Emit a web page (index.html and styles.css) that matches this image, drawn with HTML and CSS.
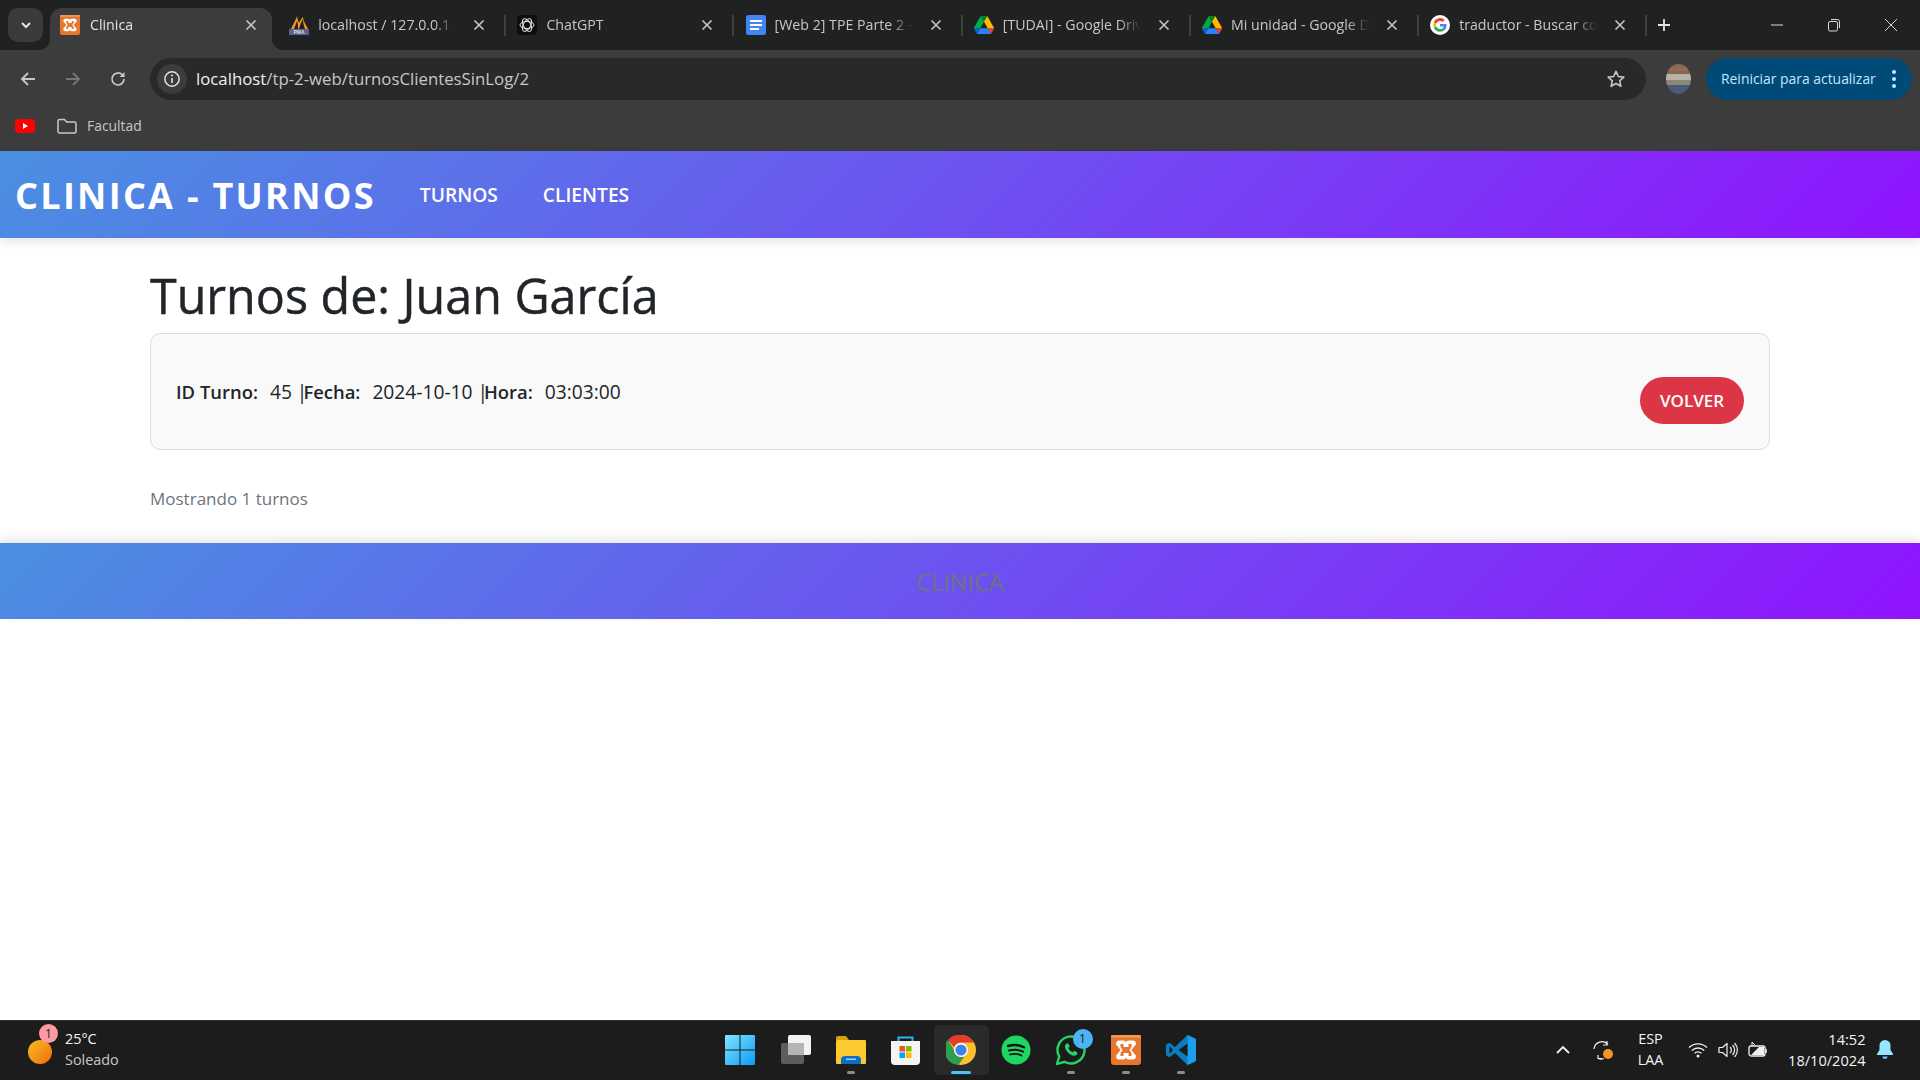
FILE: index.html
```html
<!DOCTYPE html>
<html lang="es">
<head>
<meta charset="utf-8">
<title>Clinica</title>
<link rel="stylesheet" href="styles.css">
</head>
<body>
<svg class="defs" width="0" height="0" aria-hidden="true">
  <symbol id="x" viewBox="0 0 16 16"><path d="M3.5 3.5l9 9M12.5 3.5l-9 9" fill="none" stroke="#c7c7c7" stroke-width="1.6"/></symbol>
  <symbol id="xampp" viewBox="0 0 30 30"><rect width="30" height="30" rx="3" fill="#e8772e"/><rect y="0" width="30" height="2.5" fill="#f6a76c" opacity=".7"/><path d="M8 5.5h4.5a2.5 2.5 0 0 1 2.5 2.2 2.5 2.5 0 0 1 2.5-2.2H22a3 3 0 0 1 1.5 5.6L20.5 15l3 3.9A3 3 0 0 1 22 24.5h-4.500a2.500 2.500 0 0 1-2.500-2.200 2.500 2.500 0 0 1-2.500 2.200H8a3 3 0 0 1-1.500-5.600L9.500 15l-3-3.900A3 3 0 0 1 8 5.500z" fill="#fff"/><path d="M9.500 9h3v3h5V9h3v3l-2 3 2 3v3h-3v-3h-5v3h-3v-3l2-3-2-3z" fill="#e8772e"/></symbol>
  <symbol id="drive" viewBox="0 0 87.300 78"><path d="M6.600 66.850l3.850 6.650c.8 1.400 1.950 2.500 3.300 3.300L27.500 53H0c0 1.550.4 3.100 1.200 4.500z" fill="#0066da"/><path d="M43.650 25L29.900 1.200c-1.350.8-2.500 1.900-3.300 3.300L1.200 48.500A9 9 0 0 0 0 53h27.500z" fill="#00ac47"/><path d="M73.550 76.800c1.350-.8 2.500-1.900 3.300-3.300l1.600-2.750 7.650-13.250c.8-1.400 1.200-2.950 1.200-4.500H59.800l5.850 11.500z" fill="#ea4335"/><path d="M43.650 25L57.400 1.200C56.050.4 54.500 0 52.900 0H34.400c-1.600 0-3.150.45-4.500 1.200z" fill="#00832d"/><path d="M59.800 53H27.500L13.750 76.800c1.350.8 2.900 1.200 4.500 1.200h50.800c1.600 0 3.150-.45 4.500-1.200z" fill="#2684fc"/><path d="M73.400 26.500L60.700 4.500c-.8-1.400-1.950-2.500-3.300-3.300L43.650 25 59.800 53h27.450c0-1.550-.4-3.100-1.200-4.500z" fill="#ffba00"/></symbol>
</svg>

<header class="browser">
  <div class="tabstrip">
    <div class="tabmenu"><svg width="14" height="14" viewBox="0 0 14 14"><path d="M3 5l4 4 4-4" fill="none" stroke="#e3e3e3" stroke-width="2"/></svg></div>
    <div class="tab tab-active">
      <div class="tab-body">
        <svg class="fav" viewBox="0 0 30 30"><use href="#xampp"/></svg>
        <span class="tab-title">Clinica</span>
        <svg class="tab-x"><use href="#x"/></svg>
      </div>
    </div>
    <div class="tab">
      <div class="tab-body">
        <svg class="fav" viewBox="0 0 20 20"><path d="M8 1C7 5 4 9 2 14h3c1-3 2-5 3-8 1 3 1 5 1 8h1c1-4 2-7 4-10 0 4 1 7 2 10h3C17 10 14 6 14 2c-2 2-3 4-4 6-1-3-2-5-2-7z" fill="#f29c1f"/><rect x="0" y="14" width="20" height="6" fill="#5b5f8c"/><text x="10" y="19.300" class="pma">PMA</text></svg>
        <span class="tab-title">localhost / 127.0.0.1 / clinica</span>
        <svg class="tab-x"><use href="#x"/></svg>
      </div>
      <i class="tab-sep"></i>
    </div>
    <div class="tab">
      <div class="tab-body">
        <svg class="fav" viewBox="0 0 20 20"><rect width="20" height="20" rx="4" fill="#0d0d0d"/><g fill="none" stroke="#e3e3e3" stroke-width="1"><ellipse cx="10" cy="10" rx="7" ry="3.600"/><ellipse cx="10" cy="10" rx="7" ry="3.600" transform="rotate(60 10 10)"/><ellipse cx="10" cy="10" rx="7" ry="3.600" transform="rotate(120 10 10)"/></g></svg>
        <span class="tab-title">ChatGPT</span>
        <svg class="tab-x"><use href="#x"/></svg>
      </div>
      <i class="tab-sep"></i>
    </div>
    <div class="tab">
      <div class="tab-body">
        <svg class="fav" viewBox="0 0 20 20"><rect width="20" height="20" rx="2.500" fill="#4285f4"/><path d="M4 5h12v2H4zM4 9h12v2H4zM4 13h9v2H4z" fill="#fff"/></svg>
        <span class="tab-title">[Web 2] TPE Parte 2 - Documentos</span>
        <svg class="tab-x"><use href="#x"/></svg>
      </div>
      <i class="tab-sep"></i>
    </div>
    <div class="tab">
      <div class="tab-body">
        <svg class="fav" viewBox="0 0 87.300 78"><use href="#drive"/></svg>
        <span class="tab-title">[TUDAI] - Google Drive</span>
        <svg class="tab-x"><use href="#x"/></svg>
      </div>
      <i class="tab-sep"></i>
    </div>
    <div class="tab">
      <div class="tab-body">
        <svg class="fav" viewBox="0 0 87.300 78"><use href="#drive"/></svg>
        <span class="tab-title">Mi unidad - Google Drive</span>
        <svg class="tab-x"><use href="#x"/></svg>
      </div>
      <i class="tab-sep"></i>
    </div>
    <div class="tab">
      <div class="tab-body">
        <svg class="fav" viewBox="0 0 20 20"><circle cx="10" cy="10" r="10" fill="#fff"/><path d="M16.500 10.200c0-.5 0-.9-.1-1.300H10v2.500h3.700a3.200 3.200 0 0 1-1.400 2l2.200 1.700c1.300-1.200 2-3 2-4.900z" fill="#4285f4"/><path d="M10 16.800c1.800 0 3.400-.6 4.500-1.700l-2.200-1.700c-.6.400-1.400.7-2.300.7-1.800 0-3.300-1.200-3.800-2.800L3.900 13c1.100 2.300 3.500 3.800 6.100 3.800z" fill="#34a853"/><path d="M6.200 11.300a4 4 0 0 1 0-2.600L3.900 7a6.800 6.800 0 0 0 0 6z" fill="#fbbc05"/><path d="M10 5.900c1 0 1.900.4 2.600 1l2-2A6.700 6.700 0 0 0 3.900 7l2.300 1.700C6.700 7.100 8.200 5.900 10 5.900z" fill="#ea4335"/></svg>
        <span class="tab-title">traductor - Buscar con Google</span>
        <svg class="tab-x"><use href="#x"/></svg>
      </div>
      <i class="tab-sep"></i>
    </div>
    <div class="newtab"><svg width="16" height="16" viewBox="0 0 16 16"><path d="M8 2v12M2 8h12" stroke="#e3e3e3" stroke-width="1.800"/></svg></div>
    <div class="winctl">
      <div class="winbtn"><svg width="14" height="14" viewBox="0 0 14 14"><path d="M1 7h12" stroke="#d8d8d8" stroke-width="1"/></svg></div>
      <div class="winbtn"><svg width="14" height="14" viewBox="0 0 14 14"><rect x="1.500" y="3.500" width="9" height="9.500" rx="1.500" fill="none" stroke="#d8d8d8"/><path d="M4 1.500h6.500a2 2 0 0 1 2 2V10" fill="none" stroke="#d8d8d8"/></svg></div>
      <div class="winbtn"><svg width="14" height="14" viewBox="0 0 14 14"><path d="M1 1l12 12M13 1L1 13" stroke="#d8d8d8" stroke-width="1"/></svg></div>
    </div>
  </div>

  <div class="toolbar">
    <div class="navbtn"><svg width="18" height="18" viewBox="0 0 18 18"><path d="M16 9H3M9 3L3 9l6 6" fill="none" stroke="#c7c7c7" stroke-width="1.800"/></svg></div>
    <div class="navbtn"><svg width="18" height="18" viewBox="0 0 18 18"><path d="M2 9h13M9 3l6 6-6 6" fill="none" stroke="#757575" stroke-width="1.800"/></svg></div>
    <div class="navbtn"><svg width="18" height="18" viewBox="0 0 18 18"><path d="M15 9a6 6 0 1 1-1.800-4.300L15 6.500" fill="none" stroke="#c7c7c7" stroke-width="1.700"/><path d="M15.500 2v5h-5z" fill="#c7c7c7"/></svg></div>
    <div class="omnibox">
      <div class="infochip"><svg width="18" height="18" viewBox="0 0 18 18"><circle cx="9" cy="9" r="7.200" fill="none" stroke="#e3e3e3" stroke-width="1.500"/><path d="M9 8v5" stroke="#e3e3e3" stroke-width="1.600"/><circle cx="9" cy="5.600" r="1" fill="#e3e3e3"/></svg></div>
      <span class="url"><b class="host">localhost</b>/tp-2-web/turnosClientesSinLog/2</span>
      <svg class="star" width="20" height="20" viewBox="0 0 20 20"><path d="M10 2.400l2.300 5.100 5.500.6-4.100 3.700 1.200 5.500L10 14.500l-4.900 2.800 1.200-5.500-4.100-3.700 5.500-.6z" fill="none" stroke="#c7c7c7" stroke-width="1.600" stroke-linejoin="round"/></svg>
    </div>
    <div class="avatar"><svg width="25" height="30" viewBox="0 0 25 30"><defs><clipPath id="av"><ellipse cx="12.500" cy="15" rx="12.500" ry="15"/></clipPath></defs><g clip-path="url(#av)"><rect width="25" height="10" fill="#7d6a5c"/><rect y="3" x="3" width="19" height="4" fill="#a0664a"/><rect y="10" width="25" height="6" fill="#b9b3a6"/><rect y="16" width="25" height="5" fill="#8b8778"/><rect y="21" width="25" height="9" fill="#4c5a7a"/></g></svg></div>
    <div class="update"><span>Reiniciar para actualizar</span><svg width="6" height="20" viewBox="0 0 6 20"><circle cx="3" cy="3" r="2" fill="#c2e7ff"/><circle cx="3" cy="10" r="2" fill="#c2e7ff"/><circle cx="3" cy="17" r="2" fill="#c2e7ff"/></svg></div>
  </div>

  <div class="bookmarks">
    <svg width="20" height="14" viewBox="0 0 20 14"><rect width="20" height="14" rx="4" fill="#f00"/><path d="M8 4l5 3-5 3z" fill="#fff"/></svg>
    <div class="bm-folder">
      <svg width="20" height="16" viewBox="0 0 20 16"><path d="M1 3a1.500 1.500 0 0 1 1.500-1.500h5L9.500 4h8A1.500 1.500 0 0 1 19 5.500v8a1.500 1.500 0 0 1-1.500 1.500h-15A1.500 1.500 0 0 1 1 13.500z" fill="none" stroke="#c7c7c7" stroke-width="1.500"/></svg>
      <span>Facultad</span>
    </div>
  </div>
</header>

<div class="viewport">
  <nav class="site-nav">
    <a class="brand">CLINICA - TURNOS</a>
    <a class="nav-link">TURNOS</a>
    <a class="nav-link">CLIENTES</a>
  </nav>
  <main class="content">
    <h1>Turnos de: Juan García</h1>
    <div class="turno-card">
      <p class="turno-info"><strong>ID Turno:</strong>&nbsp; 45 |<strong>Fecha:</strong>&nbsp; 2024-10-10 |<strong>Hora:</strong>&nbsp; 03:03:00</p>
      <a class="btn-volver">VOLVER</a>
    </div>
    <p class="count">Mostrando 1 turnos</p>
  </main>
  <footer class="site-footer"><span>CLINICA</span></footer>
</div>

<div class="taskbar">
  <div class="tb-left">
    <div class="weather-icon"><i class="sun"></i><b class="wbadge">1</b></div>
    <div class="weather-text"><span class="temp">25°C</span><span class="cond">Soleado</span></div>
  </div>
  <div class="tb-center">
    <div class="tb-item tb-nudge"><svg width="30" height="30" viewBox="0 0 30 30"><defs><linearGradient id="win" x1="0" y1="0" x2="1" y2="1"><stop offset="0" stop-color="#7fe6ff"/><stop offset="1" stop-color="#0e9bf5"/></linearGradient></defs><path d="M1 0h13.500v14.500H0V1a1 1 0 0 1 1-1zM15.500 0H29a1 1 0 0 1 1 1v13.500H15.500zM0 15.500h14.500V30H1a1 1 0 0 1-1-1zM15.500 15.500H30V29a1 1 0 0 1-1 1H15.500z" fill="url(#win)"/></svg></div>
    <div class="tb-item"><svg width="30" height="30" viewBox="0 0 30 30"><rect x="0" y="8" width="23" height="21" rx="2" fill="#5d5d5d"/><rect x="7" y="0" width="23" height="20" rx="2" fill="#f3f3f3"/><rect x="7" y="8" width="16" height="12" fill="#b5b5b5"/></svg></div>
    <div class="tb-item tb-pip"><svg width="30" height="28" viewBox="0 0 30 28"><path d="M0 2a2 2 0 0 1 2-2h8l3 4H0z" fill="#d9a10b"/><rect y="4" width="30" height="24" rx="1" fill="#fcc92f"/><path d="M5 24a4 4 0 0 1 4-4h12a4 4 0 0 1 4 4v4H5z" fill="#0c6fc4"/><rect x="10" y="22.500" width="10" height="1.500" fill="#9fd0f5"/></svg></div>
    <div class="tb-item tb-nudge"><svg width="29" height="30" viewBox="0 0 29 30"><path d="M7.500 6V2.500h14V6" fill="none" stroke="#2ab5ee" stroke-width="2"/><path d="M0 6h29v20a4 4 0 0 1-4 4H4a4 4 0 0 1-4-4z" fill="#f4f4f4"/><rect x="8.500" y="11" width="5.500" height="5.500" fill="#f25022"/><rect x="15" y="11" width="5.500" height="5.500" fill="#7fba00"/><rect x="8.500" y="17.500" width="5.500" height="5.500" fill="#00a4ef"/><rect x="15" y="17.500" width="5.500" height="5.500" fill="#ffb900"/></svg></div>
    <div class="tb-item tb-active"><svg width="30" height="30" viewBox="0 0 30 30"><circle cx="15" cy="15" r="15" fill="#fbc02d"/><path d="M15 0a15 15 0 0 1 13 7.500H15a7.500 7.500 0 0 0-7 4.800L2 4.800A15 15 0 0 1 15 0z" fill="#e33b2e"/><path d="M2 4.800l6.500 11A7.500 7.500 0 0 0 18.500 21.600L12.500 29.800A15 15 0 0 1 2 4.800z" fill="#2e9e4f"/><circle cx="15" cy="15" r="7" fill="#fff"/><circle cx="15" cy="15" r="5.600" fill="#3f83ea"/></svg></div>
    <div class="tb-item"><svg width="30" height="30" viewBox="0 0 30 30"><circle cx="15" cy="15" r="14.500" fill="#1ed760"/><g fill="none" stroke="#191414" stroke-linecap="round"><path d="M7 11c6-1.800 11.500-1.200 16 1.300" stroke-width="2.400"/><path d="M8 15.500c5-1.400 9.800-1 14 1.200" stroke-width="2"/><path d="M9 19.500c4.200-1 8-.8 11.500 1" stroke-width="1.700"/></g></svg></div>
    <div class="tb-item tb-pip tb-wa"><svg width="30" height="30" viewBox="0 0 30 30"><path d="M1 29l2.200-7.500A13.500 13.500 0 1 1 8.500 26.800z" fill="none" stroke="#25d366" stroke-width="2.400" stroke-linejoin="round"/><path d="M10.500 8.500c-1.500 1-2 3-1 5.500 1.500 3 4 5.500 7 6.500 2 .6 4 0 4.800-1.500l-.2-1.800-3-1.500-1.500 1.500c-2-.8-3.500-2.300-4.300-4.300l1.500-1.500-1.500-3z" fill="#25d366"/></svg><b class="wa-badge">1</b></div>
    <div class="tb-item tb-pip"><svg width="30" height="30" viewBox="0 0 30 30"><use href="#xampp"/></svg></div>
    <div class="tb-item tb-pip"><svg width="30" height="30" viewBox="0 0 30 30"><path d="M21.500 0L30 4v22l-8.500 4L9 18l-5.500 4.300L0 20.300V9.700l3.500-2L9 12z" fill="#0a7cc4"/><path d="M21.500 0L30 4v22l-8.500 4z" fill="#1c9cea"/><path d="M21.500 8.500L12.500 15l9 6.500z" fill="#1c1c1c"/><path d="M3.500 11l3.500 4-3.500 4z" fill="#1c1c1c"/></svg></div>
  </div>
  <div class="tb-right">
    <svg class="tray-chev" width="16" height="10" viewBox="0 0 16 10"><path d="M2 8l6-6 6 6" fill="none" stroke="#f0f0f0" stroke-width="1.800"/></svg>
    <svg class="tray-sync" width="20" height="20" viewBox="0 0 20 20"><path d="M1 9a8 8 0 0 1 14-4.500M14 1v4h-4M5 18.500h4M5 15v3.500a8 8 0 0 0 6 0" fill="none" stroke="#f0f0f0" stroke-width="1.200"/><circle cx="15" cy="14" r="5" fill="#f7941d"/></svg>
    <div class="lang"><span>ESP</span><span>LAA</span></div>
    <div class="tray-icons">
      <svg width="20" height="16" viewBox="0 0 20 16"><g fill="none" stroke="#f0f0f0" stroke-width="1.400"><path d="M1 5.500a13 13 0 0 1 18 0"/><path d="M3.800 8.500a9 9 0 0 1 12.400 0"/><path d="M6.600 11.300a5 5 0 0 1 6.800 0"/></g><circle cx="10" cy="14" r="1.500" fill="#f0f0f0"/></svg>
      <svg width="20" height="18" viewBox="0 0 20 18"><path d="M1 6.500h3.500L9 2.500v13l-4.500-4H1z" fill="none" stroke="#f0f0f0" stroke-width="1.200" stroke-linejoin="round"/><path d="M12 6a4 4 0 0 1 0 6M14.500 4a7 7 0 0 1 0 10M16.500 2a10 10 0 0 1 0 14" fill="none" stroke="#f0f0f0" stroke-width="1.200"/></svg>
      <svg width="20" height="16" viewBox="0 0 20 16"><rect x="1" y="4" width="16" height="10" rx="2" fill="none" stroke="#f0f0f0" stroke-width="1.300"/><path d="M18 7v4" stroke="#f0f0f0" stroke-width="1.600"/><path d="M2 14l9-9h5v8H3z" fill="#f0f0f0"/><path d="M4 4V0l3 3" fill="none" stroke="#f0f0f0"/></svg>
    </div>
    <div class="clock"><span>14:52</span><span>18/10/2024</span></div>
    <svg class="bell" width="16" height="20" viewBox="0 0 16 20"><path d="M8 0a5.500 5.500 0 0 1 5.500 5.500V10l2.500 4v1H0v-1l2.500-4V5.500A5.500 5.500 0 0 1 8 0z" fill="#96e6ff"/><path d="M5.500 16.500h5a2.500 2.500 0 0 1-5 0z" fill="#5cc4e8"/></svg>
  </div>
</div>
</body>
</html>
```

FILE: styles.css
```css
* { box-sizing: border-box; }
html, body { margin: 0; height: 100%; }
body {
  display: flex;
  flex-direction: column;
  height: 1080px;
  overflow: hidden;
  background: #fff;
  font-family: "Open Sans", "Noto Sans", sans-serif;
}
.defs { display: block; height: 0; }
svg { display: block; flex: none; }

/* browser chrome */
.browser { background: #3c3c3c; flex: none; }
.tabstrip {
  display: flex;
  align-items: flex-end;
  height: 50px;
  padding-left: 8px;
  background: #202221;
}
.tabmenu {
  width: 35px;
  height: 34px;
  margin: 0 7px 8px 0;
  border-radius: 10px;
  background: #3a3b3b;
  display: flex;
  align-items: center;
  justify-content: center;
}
.tab {
  flex: 0 0 228.2px;
  height: 42px;
  display: flex;
  align-items: center;
}
.tab-body {
  width: 222px;
  height: 42px;
  flex: none;
  display: flex;
  align-items: center;
  padding: 0 13px 8px 10px;
  border-radius: 12px 12px 0 0;
  position: relative;
}
.tab-active .tab-body { background: #3c3c3c; }
.tab-active .tab-body::before,
.tab-active .tab-body::after {
  content: "";
  position: absolute;
  bottom: 0;
  width: 12px;
  height: 12px;
}
.tab-active .tab-body::before { left: -12px; background: radial-gradient(circle at 0 0, transparent 12px, #3c3c3c 12.5px); }
.tab-active .tab-body::after { right: -12px; background: radial-gradient(circle at 100% 0, transparent 12px, #3c3c3c 12.5px); }
.fav { width: 20px; height: 20px; margin-right: 10px; }
.tab:not(.tab-active) .fav { transform: translateX(1px); }
.tab-title {
  flex: 1;
  min-width: 0;
  white-space: nowrap;
  overflow: hidden;
  font-size: 14.200px;
  line-height: 18px;
  margin-bottom: 1px;
  color: #c7c7c7;
  -webkit-mask-image: linear-gradient(90deg, #000 84%, transparent 100%);
  mask-image: linear-gradient(90deg, #000 84%, transparent 100%);
}
.tab-active .tab-title { color: #e3e3e3; }
.tab-x { width: 16px; height: 16px; margin-left: 15px; }
.tab-sep {
  width: 2px;
  height: 21px;
  margin: 0 0 8px 4px;
  background: #3f4140;
  flex: none;
}
.pma { font: bold 5px "Liberation Sans", sans-serif; fill: #d8dcf0; text-anchor: middle; }
.newtab {
  width: 44px;
  height: 42px;
  padding-bottom: 8px;
  display: flex;
  align-items: center;
  justify-content: center;
  margin-left: -5px;
}
.winctl { margin-left: auto; padding-right: 1px; display: flex; height: 50px; align-self: flex-start; }
.winbtn {
  width: 57px;
  height: 50px;
  display: flex;
  align-items: center;
  justify-content: center;
}

.toolbar {
  display: flex;
  align-items: center;
  height: 58px;
  padding: 8px 8px 8px 5px;
  border-radius: 8px 8px 0 0;
}
.navbtn {
  width: 45px;
  height: 42px;
  display: flex;
  align-items: center;
  justify-content: center;
}
.omnibox {
  width: 1496px;
  height: 42px;
  margin-left: 10px;
  border-radius: 21px;
  background: #292929;
  display: flex;
  align-items: center;
  padding: 0 20px 0 7px;
}
.infochip {
  width: 30px;
  height: 30px;
  border-radius: 50%;
  background: #3c3c3c;
  display: flex;
  align-items: center;
  justify-content: center;
  margin-right: 9px;
}
.url { flex: 1; font-size: 16.800px; line-height: 24px; color: #c7c7c7; white-space: nowrap; }
.host { font-weight: 400; color: #f0f0f0; }
.avatar { margin-left: 20px; width: 25px; }
.update {
  margin-left: 15px;
  width: 206px;
  height: 42px;
  border-radius: 21px;
  background: #004a77;
  color: #c2e7ff;
  font-size: 13.900px;
  display: flex;
  align-items: center;
  justify-content: space-between;
  padding: 0 15px 0 15px;
  white-space: nowrap;
}
.update span { margin-bottom: 2px; }
.bookmarks {
  height: 43px;
  display: flex;
  align-items: center;
  padding: 0 0 8px 15px;
}
.bm-folder {
  display: flex;
  align-items: center;
  gap: 10px;
  margin-left: 22px;
  font-size: 13.900px;
  color: #c7c7c7;
}

/* page */
.viewport { flex: 1; min-height: 0; background: #fff; }
.site-nav {
  height: 87px;
  display: flex;
  align-items: center;
  padding-left: 15px;
  background: linear-gradient(135deg, #4a90e2, #9013fe);
  box-shadow: 0 4px 10px rgba(0,0,0,.1);
  color: #fff;
}
.brand { font-size: 36px; font-weight: 700; letter-spacing: 2.300px; margin: 2px 44px 0 0; }
.nav-link { font-size: 19.200px; font-weight: 600; margin-right: 45px; }
.content { padding: 0 150px; height: 305px; }
h1 {
  margin: 0;
  padding-top: 27px;
  height: 95px;
  font-size: 48.400px;
  font-weight: 500;
  -webkit-text-stroke: .45px #212529;
  line-height: 60px;
  color: #212529;
}
.turno-card {
  height: 117px;
  border: 1px solid #ddd;
  border-radius: 10px;
  background: #f9f9f9;
  display: flex;
  justify-content: space-between;
  padding: 0 25px;
}
.turno-info { margin: 0; align-self: center; font-size: 19.200px; color: #212529; }
.turno-info strong { font-weight: 600; font-size: .96em; margin-right: 2px; }
.turno-info strong + strong { margin-left: -4px; }
.btn-volver {
  align-self: flex-end;
  margin-bottom: 25px;
  width: 104px;
  height: 47px;
  border-radius: 24px;
  background: #dc3545;
  color: #fff;
  font-size: 17px;
  font-weight: 600;
  display: flex;
  align-items: center;
  justify-content: center;
}
.count { margin: 37px 0 0; font-size: 17px; line-height: 24px; color: #6c757d; }
.site-footer {
  height: 76px;
  background: linear-gradient(135deg, #4a90e2, #9013fe);
  box-shadow: 0 -4px 10px rgba(0,0,0,.1);
  display: flex;
  align-items: center;
  justify-content: center;
  padding-top: 2px;
  color: #6c757d;
  font-size: 23.500px;
}

/* taskbar */
.taskbar {
  height: 60px;
  flex: none;
  display: grid;
  grid-template-columns: 1fr auto 1fr;
  align-items: center;
  background: #1c1c1c;
  box-shadow: inset 0 1px 0 #2f2f2f;
  color: #f5f5f5;
}
.tb-left { display: flex; align-items: center; padding-left: 28px; }
.weather-icon { width: 37px; height: 36px; position: relative; }
.sun {
  display: block;
  width: 24px;
  height: 24px;
  margin-top: 8px;
  border-radius: 50%;
  background: linear-gradient(135deg, #f5c01f, #f56a0c);
}
.wbadge {
  position: absolute;
  left: 11px;
  top: -8px;
  width: 19px;
  height: 19px;
  border-radius: 50%;
  background: #ff99a4;
  color: #1c1c1c;
  font-size: 12px;
  font-weight: 400;
  line-height: 19px;
  text-align: center;
}
.weather-text { display: flex; flex-direction: column; font-size: 14.400px; line-height: 20.500px; margin-bottom: 1px; }
.cond { color: #c9c9c9; }
.tb-center { display: flex; transform: translateX(1px); }
.tb-item {
  width: 55px;
  height: 50px;
  display: flex;
  align-items: center;
  justify-content: center;
  position: relative;
}
.tb-nudge svg { margin-left: -2px; }
.tb-active { background: #2a2a2a; border-radius: 5px; }
.tb-active::after,
.tb-pip::after {
  content: "";
  position: absolute;
  bottom: 1px;
  left: 50%;
  transform: translateX(-50%);
  width: 8px;
  height: 3px;
  border-radius: 2px;
  background: #8d8d8d;
}
.tb-active::after { width: 20px; background: #4cc2ff; }
.wa-badge {
  position: absolute;
  left: 29px;
  top: 4px;
  width: 20px;
  height: 20px;
  border-radius: 50%;
  background: #4cb4f5;
  color: #1c1c1c;
  font-size: 12px;
  font-weight: 400;
  line-height: 20px;
  text-align: center;
}
.tb-right { display: flex; align-items: center; justify-content: flex-start; padding-left: 347px; }
.tray-chev { margin-right: 22px; }
.lang { display: flex; flex-direction: column; align-items: center; width: 30px; margin-left: 23px; font-size: 14.400px; line-height: 20.500px; margin-bottom: 1px; }
.tray-icons { display: flex; gap: 10px; margin-left: 22px; align-items: center; }
.clock { display: flex; flex-direction: column; align-items: flex-end; margin-left: 8px; width: 90px; font-size: 14.600px; line-height: 20.500px; margin-bottom: 1px; }
.bell { margin-left: 11px; }
```
